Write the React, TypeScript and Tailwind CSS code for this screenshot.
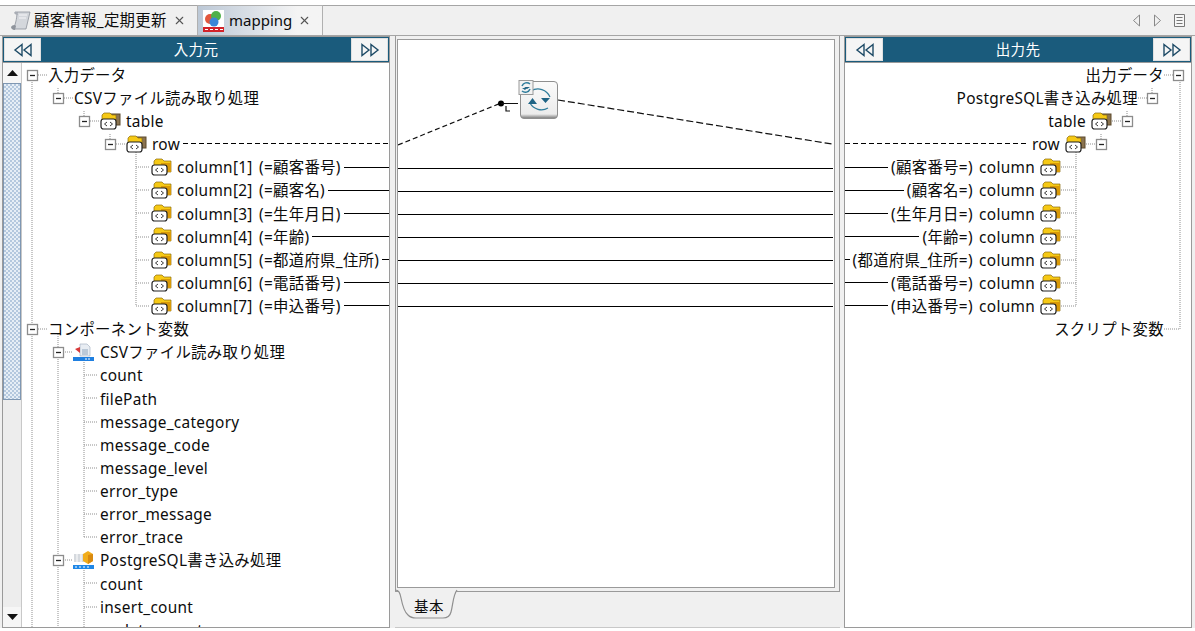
import { ReactNode } from 'react';
import { X } from 'lucide-react';

const FONT = "font-['Noto_Sans','Noto_Sans_CJK_JP',sans-serif]";

type IconKind = 'table' | 'column' | 'csv' | 'pg' | 'none';

interface TreeRow {
  label: string;
  pad: string;
  icon?: IconKind;
  line?: 'solid' | 'dashed';
}

const leftRows: TreeRow[] = [
  { label: '入力データ', pad: 'pl-[26px]' },
  { label: 'CSVファイル読み取り処理', pad: 'pl-[52px]' },
  { label: 'table', pad: 'pl-[78px]', icon: 'table' },
  { label: 'row', pad: 'pl-[104px]', icon: 'table', line: 'dashed' },
  { label: 'column[1] (=顧客番号)', pad: 'pl-[129px]', icon: 'column', line: 'solid' },
  { label: 'column[2] (=顧客名)', pad: 'pl-[129px]', icon: 'column', line: 'solid' },
  { label: 'column[3] (=生年月日)', pad: 'pl-[129px]', icon: 'column', line: 'solid' },
  { label: 'column[4] (=年齢)', pad: 'pl-[129px]', icon: 'column', line: 'solid' },
  { label: 'column[5] (=都道府県_住所)', pad: 'pl-[129px]', icon: 'column', line: 'solid' },
  { label: 'column[6] (=電話番号)', pad: 'pl-[129px]', icon: 'column', line: 'solid' },
  { label: 'column[7] (=申込番号)', pad: 'pl-[129px]', icon: 'column', line: 'solid' },
  { label: 'コンポーネント変数', pad: 'pl-[26px]' },
  { label: 'CSVファイル読み取り処理', pad: 'pl-[51px]', icon: 'csv' },
  { label: 'count', pad: 'pl-[78px]' },
  { label: 'filePath', pad: 'pl-[78px]' },
  { label: 'message_category', pad: 'pl-[78px]' },
  { label: 'message_code', pad: 'pl-[78px]' },
  { label: 'message_level', pad: 'pl-[78px]' },
  { label: 'error_type', pad: 'pl-[78px]' },
  { label: 'error_message', pad: 'pl-[78px]' },
  { label: 'error_trace', pad: 'pl-[78px]' },
  { label: 'PostgreSQL書き込み処理', pad: 'pl-[51px]', icon: 'pg' },
  { label: 'count', pad: 'pl-[78px]' },
  { label: 'insert_count', pad: 'pl-[78px]' },
  { label: 'update_count', pad: 'pl-[78px]' },
];

const rightRows: TreeRow[] = [
  { label: '出力データ', pad: 'pr-[27px]' },
  { label: 'PostgreSQL書き込み処理', pad: 'pr-[53px]' },
  { label: 'table', pad: 'pr-[79px]', icon: 'table' },
  { label: 'row', pad: 'pr-[105px]', icon: 'table', line: 'dashed' },
  { label: '(顧客番号=) column', pad: 'pr-[130px]', icon: 'column', line: 'solid' },
  { label: '(顧客名=) column', pad: 'pr-[130px]', icon: 'column', line: 'solid' },
  { label: '(生年月日=) column', pad: 'pr-[130px]', icon: 'column', line: 'solid' },
  { label: '(年齢=) column', pad: 'pr-[130px]', icon: 'column', line: 'solid' },
  { label: '(都道府県_住所=) column', pad: 'pr-[130px]', icon: 'column', line: 'solid' },
  { label: '(電話番号=) column', pad: 'pr-[130px]', icon: 'column', line: 'solid' },
  { label: '(申込番号=) column', pad: 'pr-[130px]', icon: 'column', line: 'solid' },
  { label: 'スクリプト変数', pad: 'pr-[27px]' },
];

const DASH = 'h-px flex-1 bg-[repeating-linear-gradient(90deg,#000_0_5px,transparent_5px_8px)]';

// y centre of a tree row
const rowY = (i: number) => Math.round(75 + i * 23.13) + 0.5;

function FolderIcon({ kind }: { kind: 'table' | 'column' }) {
  return (
    <svg width="21" height="20" viewBox="0 0 21 20" className="shrink-0">
      {kind === 'table' && <rect x="9" y="3" width="11" height="11" fill="#8a7350" stroke="#5c4a2c" />}
      <path d={kind === 'table' ? 'M2 9V4l2-2h6l2 2h4v8H2z' : 'M3 10V4l2-2h6l2 2h7v11H3z'} fill="#f6c915" stroke="#8a6a10" strokeWidth="0.7" />
      <rect x="10" y="6" width="10" height="9" fill={kind === 'table' ? 'none' : '#d99a08'} />
      <rect x="1" y="8" width="15" height="10" rx="2.5" fill="#fff" stroke="#222" strokeWidth="1.2" />
      <path d="M7 11l-2.5 2L7 15M10 11l2.5 2L10 15" fill="none" stroke="#222" strokeWidth="0.9" />
    </svg>
  );
}

function CsvIcon() {
  return (
    <svg width="22" height="20" viewBox="0 0 22 20" className="shrink-0">
      <path d="M7 2h7l3 3v9H7z" fill="#e8edf3" stroke="#a9b6c4" strokeWidth="0.7" />
      <path d="M2 7l5-2v6z" fill="#d83a3a" />
      <path d="M9 8h6M9 10h6M9 12h6" stroke="#8fa5bd" />
      <rect x="0" y="15" width="21" height="4" fill="#1f7fe0" />
      <path d="M12 17h2M15 17h2" stroke="#fff" />
    </svg>
  );
}

function PgIcon() {
  return (
    <svg width="22" height="20" viewBox="0 0 22 20" className="shrink-0">
      <path d="M1 4h11v8H1z" fill="#d5d9de" />
      <path d="M4 4v8M8 4v8" stroke="#fff" />
      <path d="M10 4l5-3 5 3v7l-5 3-5-3z" fill="#f1ad1c" />
      <path d="M15 5v9l5-3V4z" fill="#d98a10" />
      <rect x="0" y="15" width="21" height="4" fill="#1f87e6" />
      <path d="M2 17h2M6 17h2M10 17h2M14 17h2" stroke="#fff" />
    </svg>
  );
}

function RowIcon({ kind }: { kind?: IconKind }) {
  if (kind === 'table' || kind === 'column') return <FolderIcon kind={kind} />;
  if (kind === 'csv') return <CsvIcon />;
  if (kind === 'pg') return <PgIcon />;
  return null;
}

function LeftRow({ row }: { row: TreeRow }) {
  return (
    <div className={`flex h-[23.13px] items-center whitespace-nowrap ${row.pad}`}>
      {row.icon && <RowIcon kind={row.icon} />}
      <span className={`pt-[2px] ${row.icon ? 'ml-[5px]' : ''}`}>{row.label}</span>
      {row.line === 'solid' && <div className="ml-[3px] h-px flex-1 bg-black" />}
      {row.line === 'dashed' && <div className={`ml-[3px] ${DASH}`} />}
    </div>
  );
}

function RightRow({ row }: { row: TreeRow }) {
  return (
    <div className={`flex h-[23.13px] items-center whitespace-nowrap ${row.pad}`}>
      {row.line === 'solid' && <div className="mr-[3px] h-px flex-1 bg-black" />}
      {row.line === 'dashed' && <div className={`mr-[4px] ${DASH}`} />}
      {!row.line && <div className="flex-1" />}
      <span className={`pt-[2px] ${row.icon ? 'mr-[5px]' : ''}`}>{row.label}</span>
      {row.icon && <RowIcon kind={row.icon} />}
    </div>
  );
}

function Toggle({ x, y }: { x: number; y: number }) {
  return (
    <g>
      <rect x={x - 4.5} y={y - 4.5} width="10" height="10" fill="#fff" stroke="#8c8c8c" strokeWidth="1.3" />
      <path d={`M${x - 2} ${y + 0.5}h5`} stroke="#222" strokeWidth="1.3" />
    </g>
  );
}

function Guides({ lines, toggles, viewBox }: { lines: string; toggles: [number, number][]; viewBox: string }) {
  return (
    <svg viewBox={viewBox} className="absolute inset-0 h-full w-full">
      <path d={lines} fill="none" stroke="#8f8f8f" strokeDasharray="1 1" />
      {toggles.map(([x, y]) => (
        <Toggle key={`${x}-${y}`} x={x} y={y} />
      ))}
    </svg>
  );
}

function PanelHeader({ title }: { title: string }) {
  return (
    <div className="flex h-[25px] items-center justify-between bg-[#1a5b7c] p-[1px]">
      <HeaderButton dir="left" />
      <span className="text-[14.5px] text-white">{title}</span>
      <HeaderButton dir="right" />
    </div>
  );
}

function HeaderButton({ dir }: { dir: 'left' | 'right' }) {
  return (
    <button className="flex h-[23px] w-[37px] items-center justify-center border border-[#e0e0e0] bg-[#f5f5f5]">
      <svg width="20" height="14" viewBox="0 0 20 14">
        <path
          d={dir === 'left' ? 'M9 1.5L2 7l7 5.5zM18 1.5L11 7l7 5.5z' : 'M2 1.5L9 7l-7 5.5zM11 1.5L18 7l-7 5.5z'}
          fill="none"
          stroke="#1d4a66"
          strokeWidth="1.4"
        />
      </svg>
    </button>
  );
}

function ScrollArrow({ up }: { up?: boolean }) {
  return (
    <div className="flex h-[20px] items-center justify-center bg-[#f6f6f6]">
      <svg width="11" height="6" viewBox="0 0 11 6">
        <path d={up ? 'M0 6L5.5 0 11 6z' : 'M0 0h11L5.5 6z'} fill="#111" />
      </svg>
    </div>
  );
}

function Panel({ children }: { children: ReactNode }) {
  return <div className="flex flex-col overflow-hidden border border-[#9a9a9a] bg-white">{children}</div>;
}

function MappingCanvas() {
  const solidYs = [4, 5, 6, 7, 8, 9, 10].map(rowY);
  return (
    <svg viewBox="398 40 436 547" className="block h-full w-full">
      {solidYs.map(y => (
        <path key={y} d={`M398 ${y}H833`} stroke="#000" />
      ))}
      <path d="M398 145L501 103" fill="none" stroke="#111" strokeWidth="1.2" strokeDasharray="5 3" />
      <path d="M558 100L832 144" fill="none" stroke="#111" strokeWidth="1.2" strokeDasharray="7 3" />
      <circle cx="501" cy="103.5" r="3" fill="#000" />
      <path d="M501 103.5H518M506 106v5h4" fill="none" stroke="#111" strokeWidth="1.2" />
      <defs>
        <linearGradient id="node" x1="0" y1="0" x2="0" y2="1">
          <stop offset="0" stopColor="#fbfbfb" />
          <stop offset="0.88" stopColor="#ececec" />
          <stop offset="1" stopColor="#777" />
        </linearGradient>
      </defs>
      <rect x="520.5" y="81.5" width="37" height="37" rx="3.5" fill="url(#node)" stroke="#8f8f8f" />
      <path d="M531 91a13 13 0 0 1 19 6M548 108a13 13 0 0 1-18-5" fill="none" stroke="#2f7d9c" strokeWidth="1.2" />
      <path d="M541 98h9l-4.500 5zM528 104h9l-4.500-6z" fill="#1f6485" />
      <rect x="519" y="80.500" width="14" height="14" fill="#f2f2f2" stroke="#9a9a9a" />
      <path d="M522 86a5 5 0 0 1 8-2M530 89a5 5 0 0 1-8 2" fill="none" stroke="#2f7d9c" strokeWidth="1.5" />
      <path d="M524 87h6l-3 2zM522 88h5l-2 2z" fill="#1f6485" />
    </svg>
  );
}

export default function App() {
  return (
    <div className={`flex h-[631px] w-[1195px] flex-col overflow-hidden bg-white pb-[4px] text-[15.4px] leading-none tracking-[0.3px] text-[#0c0c0c] [word-spacing:2px] ${FONT}`}>
      {/* Editor tabs */}
      <div className="mt-[5px] flex h-[31px] items-end border-y border-[#a5a5a5] bg-[#f0f0f0] pl-[3px]">
        <div className="flex h-[29px] w-[192px] items-center">
          <svg width="22" height="22" viewBox="0 0 22 22" className="ml-[7px]">
            <path d="M7 2H20L16 19H3C5 16 7 9 7 2z" fill="#d4d7dc" stroke="#8b9099" strokeWidth="0.8" />
            <path d="M9 5h8M9 8h7" stroke="#f5f6f7" strokeWidth="1.2" />
            <path d="M4 3c1-2 3-2 3-1l1 3C6 5 5 4 4 3z" fill="#a9adb5" />
            <path d="M1 17c1-2 4-3 5-1l-1 4c-2 0-4-1-4-3z" fill="#8f949c" />
          </svg>
          <span className="ml-[2px]">顧客情報_定期更新</span>
          <X className="ml-[6px] h-[13px] w-[13px] text-[#555]" />
        </div>
        <div className="ml-[2px] flex h-[30px] w-[126px] items-center border-x border-t border-[#b0b0b0] bg-gradient-to-r from-[#bcc8d6] to-[#f4f4f4] to-80%">
          <svg width="21" height="22" viewBox="0 0 21 22" className="ml-[5px]">
            <rect width="21" height="22" fill="#fff" />
            <circle cx="7" cy="9" r="5" fill="#e2573d" />
            <circle cx="13" cy="6" r="5" fill="#4fb04a" />
            <circle cx="11" cy="12" r="4.500" fill="#3b86d6" />
            <rect y="17" width="21" height="5" fill="#d3242a" />
            <path d="M2 19.500h3M7 19.500h3M12 19.500h3M17 19.500h3" stroke="#fff" />
          </svg>
          <span className="ml-[5px] text-[15px] tracking-normal">mapping</span>
          <X className="ml-[6px] h-[13px] w-[13px] text-[#555]" />
        </div>
        <div className="flex h-[29px] flex-1 items-center justify-end gap-[12px] pr-[10px]">
          <svg width="9" height="13" viewBox="0 0 9 13"><path d="M7.500 1L1.500 6.500l6 5.500z" fill="none" stroke="#888" /></svg>
          <svg width="9" height="13" viewBox="0 0 9 13"><path d="M1.500 1l6 5.500-6 5.500z" fill="none" stroke="#888" /></svg>
          <svg width="11" height="13" viewBox="0 0 11 13"><path d="M.5.5h10v12H.5zM2.500 3.500h6M2.500 6.500h6M2.500 9.500h6" fill="#f6f6f6" stroke="#777" /></svg>
        </div>
      </div>

      <div className="flex flex-1 bg-[#f0f0f0] pl-[2px] pr-[3px]">
        {/* Source panel */}
        <div className="flex w-[388px] flex-col">
          <Panel>
            <PanelHeader title="入力元" />
            <div className="flex h-[565px] border-t border-[#9a9a9a]">
              <div className="flex w-[19px] shrink-0 flex-col border-r border-[#c8c8c8] bg-[#ededed]">
                <ScrollArrow up />
                <div className="h-[317px] border border-[#7f97b2] bg-[repeating-conic-gradient(#b4c8de_0_25%,#e6eef6_0_50%)] bg-[length:4px_4px]" />
                <div className="flex-1" />
                <ScrollArrow />
              </div>
              <div className="relative flex-1 overflow-hidden">
                <Guides
                  viewBox="22 63 367 564"
                  lines="M32 80V324M32 334V627M58 88V93M84 111V116M110 134V139M32 75H48M58 98H74M84 121H99M110 144H125M136 150V306M136 167H150M136 190H150M136 213H150M136 237H150M136 260H150M136 283H150M136 306H150M32 329H48M58 334V347M58 357V555M58 565V627M63 352H72M84 362V537M84 375H98M84 398H98M84 422H98M84 445H98M84 468H98M84 491H98M84 514H98M84 537H98M63 560H72M84 570V627M84 583H98M84 607H98"
                  toggles={[[32, 75], [58, 98], [84, 121], [110, 144], [32, 329], [58, 352], [58, 560]]}
                />
                <div className="relative">
                  {leftRows.map((row, i) => (
                    <LeftRow key={i} row={row} />
                  ))}
                </div>
              </div>
            </div>
          </Panel>
        </div>

        {/* Mapping canvas */}
        <div className="ml-[5px] flex w-[445px] flex-col">
          <div className="h-[556px] border-x border-b border-[#9a9a9a] pl-[1px] pt-[3px]">
            <div className="h-[549px] w-[438px] border border-[#9a9a9a] bg-white">
              <MappingCanvas />
            </div>
          </div>
          <div className="relative flex-1 border-b border-[#c8c8c8]">
            <svg width="68" height="34" viewBox="0 0 68 34" className="absolute left-0 top-[-3px]">
              <path d="M0 1c4 0 5 3 6 8s3 14 7 17c2 2 4 3 8 3h27c5 0 7-2 8-6 2-7 2-17 6-22" fill="#f0f0f0" stroke="#8f8f8f" strokeWidth="1.2" />
            </svg>
            <span className="absolute left-[19px] top-[7px] text-[14.5px] tracking-[0.6px]">基本</span>
          </div>
        </div>

        {/* Target panel */}
        <div className="ml-[4px] flex w-[348px] flex-col">
          <Panel>
            <PanelHeader title="出力先" />
            <div className="relative h-[565px] overflow-hidden border-t border-[#9a9a9a]">
              <Guides
                viewBox="845 63 346 564"
                lines="M1180 80V329M1164 75H1173M1164 329H1180M1152 88V93M1138 98H1147M1127 111V116M1112 121H1122M1101 134V139M1086 144H1096M1076 150V306M1061 167H1076M1061 190H1076M1061 213H1076M1061 237H1076M1061 260H1076M1061 283H1076M1061 306H1076"
                toggles={[[1178, 75], [1152, 98], [1127, 121], [1101, 144]]}
              />
              <div className="relative">
                {rightRows.map((row, i) => (
                  <RightRow key={i} row={row} />
                ))}
              </div>
            </div>
          </Panel>
        </div>
      </div>
    </div>
  );
}
